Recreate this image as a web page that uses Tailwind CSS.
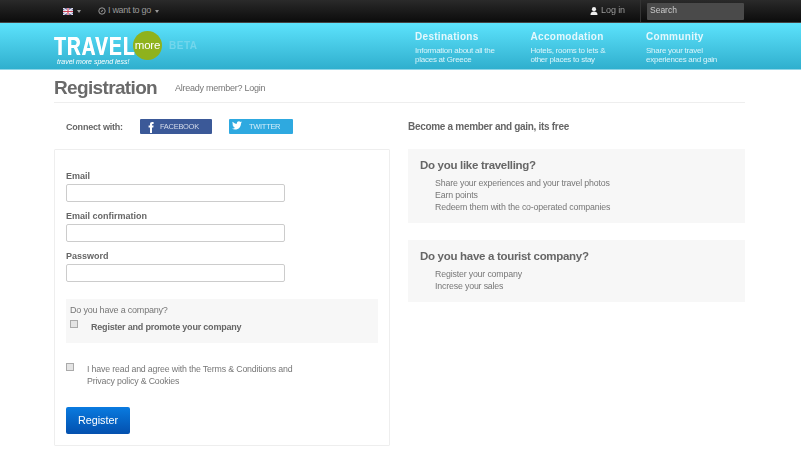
<!DOCTYPE html>
<html lang="en">
<head>
  <meta charset="UTF-8">
  <title>Registration</title>
  <script src="https://cdn.jsdelivr.net/npm/@tailwindcss/browser@4"></script>
</head>
<body class="h-[466px] overflow-hidden bg-white font-['Liberation_Sans',Arial,sans-serif] text-[#777]">
<div class="blur-[0.3px]">

  <!-- top bar -->
  <div class="h-[23px] flex items-center bg-gradient-to-b from-[#2a2a2a] to-[#0c0c0c] border-b border-[#444] text-[9px] text-[#999]">
    <div class="ml-[63px] flex items-center gap-[4px]">
      <svg width="10" height="7" viewBox="0 0 10 7"><rect width="10" height="7" fill="#5b5f9e"/><path d="M0 0L10 7M10 0L0 7" stroke="#eee" stroke-width="1.2"/><path d="M5 0V7M0 3.5H10" stroke="#fff" stroke-width="2.4"/><path d="M5 0V7M0 3.5H10" stroke="#c8455a" stroke-width="1.2"/></svg>
      <span class="w-0 h-0 border-x-[2.5px] border-x-transparent border-t-[3px] border-t-[#999]"></span>
    </div>
    <div class="ml-[17px] flex items-center">
      <svg width="8" height="8" viewBox="0 0 8 8" fill="none" stroke="#999"><circle cx="4" cy="4" r="3.2"/><path d="M5.500 2.500L4.400 4.400 2.500 5.500 3.600 3.600Z" fill="#999" stroke="none"/></svg>
      <span class="ml-[2px] tracking-[-0.3px]">I want to go</span>
      <span class="ml-[4px] w-0 h-0 border-x-[2.5px] border-x-transparent border-t-[3px] border-t-[#999]"></span>
    </div>
    <div class="ml-auto flex items-center">
      <svg width="8" height="8" viewBox="0 0 8 8" fill="#eee"><circle cx="4" cy="2.200" r="2.100"/><path d="M0.500 8C0.500 5.300 2 4.600 4 4.600S7.500 5.300 7.500 8Z"/></svg>
      <span class="ml-[3px] tracking-[-0.1px]">Log in</span>
    </div>
    <div class="ml-[15px] h-full border-l border-[#333]"></div>
    <div class="ml-[6px] mr-[57px] w-[97px] h-[17px] bg-[#4a4a4a] rounded-[1px] pl-[3px] leading-[15px] text-[8.5px] text-[#ccc]">Search</div>
  </div>

  <!-- blue header -->
  <div class="h-[47px] flex bg-gradient-to-b from-[#5ce3fc] to-[#2fafce] border-b border-[#8fd6e8] pl-[54px] text-white">
    <div class="w-[361px] relative">
      <div class="flex items-center pt-[8px]">
        <span class="mt-[1px] w-[78px] text-[25px] leading-[20px] font-bold tracking-[1.5px] [text-shadow:0.6px_0_0_#fff] scale-x-[0.76] origin-left whitespace-nowrap">TRAVEL</span>
        <span class="ml-px w-[29px] h-[29px] rounded-full bg-[#8fb21c] flex items-center justify-center text-[11.5px] tracking-[-0.2px]">more</span>
        <span class="ml-[7px] text-[10px] font-bold tracking-[0.5px] text-[#72d6ec]">BETA</span>
      </div>
      <div class="absolute top-[35px] left-[3px] text-[7px] leading-[8px] italic whitespace-nowrap">travel more spend less!</div>
    </div>
    <div class="w-[115.5px] pt-[8px]">
      <div class="text-[10px] leading-[12px] font-bold tracking-[0.3px] text-[#e4f8fd]">Destinations</div>
      <div class="mt-[3px] text-[8px] leading-[9px] tracking-[-0.25px] text-[#d9f4fa]">Information about all the<br>places at Greece</div>
    </div>
    <div class="w-[115.5px] pt-[8px]">
      <div class="text-[10px] leading-[12px] font-bold tracking-[0.3px] text-[#e4f8fd]">Accomodation</div>
      <div class="mt-[3px] text-[8px] leading-[9px] tracking-[-0.25px] text-[#d9f4fa]">Hotels, rooms to lets &amp;<br>other places to stay</div>
    </div>
    <div class="pt-[8px]">
      <div class="text-[10px] leading-[12px] font-bold tracking-[0.3px] text-[#e4f8fd]">Community</div>
      <div class="mt-[3px] text-[8px] leading-[9px] tracking-[-0.25px] text-[#d9f4fa]">Share your travel<br>experiences and gain</div>
    </div>
  </div>

  <main class="ml-[54px] w-[691px]">
    <div class="h-[33px] flex items-center border-b border-[#eee]">
      <h1 class="mt-[3px] text-[19px] tracking-[-0.65px] font-bold text-[#6a6a6a] leading-[32px]">Registration</h1>
      <span class="mt-[6px] ml-[18px] text-[9px] tracking-[-0.25px] text-[#777]">Already member? Login</span>
    </div>

    <div class="flex">
      <!-- left column -->
      <div class="w-[336px]">
        <div class="h-[46px] pl-[12px] flex items-center text-[9px] tracking-[-0.2px] font-bold text-[#666]">
          <span class="w-[74px] pt-[4px]">Connect with:</span>
          <span class="mt-[1px] w-[72px] h-[15px] bg-[#3b5998] rounded-[1px] flex items-center text-[7.5px] tracking-[-0.3px] text-[#d5dcea]">
            <svg class="ml-[5px]" width="10" height="12" viewBox="0 0 10 12" fill="#fff"><path d="M5 12V6.500H3.600V4.600H5V3.400C5 1.800 5.800 1 7.200 1H8.600V3H7.700C7.200 3 7 3.200 7 3.700V4.600H8.600L8.300 6.500H7V12Z"/></svg>
            <span class="ml-[5px] pt-px font-normal">FACEBOOK</span>
          </span>
          <span class="mt-[1px] ml-[17px] w-[64px] h-[15px] bg-[#2ea9e0] rounded-[1px] flex items-center text-[7.5px] tracking-[-0.3px] text-[#d5eef9]">
            <svg class="ml-[3px] -mt-[2px]" width="10" height="9" viewBox="0 0 24 20" fill="#fff"><path d="M24 2.400c-.9.4-1.800.7-2.800.8 1-.6 1.800-1.600 2.200-2.700-1 .6-2 1-3.100 1.200C19.300.7 18 0 16.600 0c-2.700 0-4.900 2.200-4.900 4.900 0 .4 0 .8.1 1.100C7.700 5.800 4.100 3.900 1.700.9c-.4.7-.7 1.600-.7 2.500 0 1.700.9 3.200 2.200 4.100-.8 0-1.600-.2-2.200-.6v.1c0 2.400 1.700 4.400 3.900 4.800-.4.1-.8.2-1.300.2-.3 0-.6 0-.9-.1.6 2 2.400 3.400 4.600 3.400-1.700 1.300-3.800 2.100-6.100 2.100-.4 0-.8 0-1.200-.1 2.200 1.400 4.800 2.200 7.500 2.200 9.100 0 14-7.500 14-14v-.6c1-.7 1.800-1.600 2.400-2.600z"/></svg>
            <span class="ml-[7px] pt-px font-normal">TWITTER</span>
          </span>
        </div>

        <form class="h-[297px] border border-[#eee] rounded-[1px] pl-[11px] pr-[11px] pt-[20px]">
          <label class="block text-[9px] leading-[12px] font-bold text-[#666]">Email</label>
          <input type="text" class="block mt-[2px] w-[219px] h-[18px] bg-white border border-[#ccc] rounded-[2px]">
          <label class="block mt-[8px] text-[9px] leading-[12px] font-bold text-[#666]">Email confirmation</label>
          <input type="text" class="block mt-[2px] w-[219px] h-[18px] bg-white border border-[#ccc] rounded-[2px]">
          <label class="block mt-[8px] text-[9px] leading-[12px] font-bold text-[#666]">Password</label>
          <input type="text" class="block mt-[2px] w-[219px] h-[18px] bg-white border border-[#ccc] rounded-[2px]">

          <div class="mt-[17px] h-[44px] w-[312px] bg-[#f7f7f7] pl-[4px] pt-[5px]">
            <div class="text-[9px] leading-[12px] tracking-[-0.2px]">Do you have a company?</div>
            <div class="flex mt-[4px]">
              <span class="block w-[8px] h-[8px] bg-[#e4e4e4] border border-[#aaa]"></span>
              <span class="ml-[13px] mt-[1px] text-[9px] tracking-[-0.2px] leading-[12px] font-bold text-[#666]">Register and promote your company</span>
            </div>
          </div>

          <div class="mt-[20px] flex">
            <span class="block w-[8px] h-[8px] bg-[#e4e4e4] border border-[#aaa]"></span>
            <span class="ml-[13px] text-[8.8px] tracking-[-0.17px] leading-[12px]">I have read and agree with the Terms &amp; Conditions and<br>Privacy policy &amp; Cookies</span>
          </div>

          <button type="button" class="block mt-[20px] w-[64px] h-[27px] rounded-[2px] bg-gradient-to-b from-[#0a7be0] to-[#0450ae] text-white text-[10.8px]">Register</button>
        </form>
      </div>

      <!-- right column -->
      <div class="ml-[18px] w-[337px]">
        <div class="h-[46px] pt-[17px] text-[10px] tracking-[-0.3px] leading-[13px] font-bold text-[#666]">Become a member and gain, its free</div>
        <section class="h-[74px] bg-[#f7f7f7] pl-[12px] pt-[9px]">
          <h2 class="text-[11.5px] tracking-[-0.3px] leading-[14px] font-bold text-[#666]">Do you like travelling?</h2>
          <ul class="mt-[5px] ml-[15px] text-[8.8px] tracking-[-0.17px] leading-[12px]">
            <li>Share your experiences and your travel photos</li>
            <li>Earn points</li>
            <li>Redeem them with the co-operated companies</li>
          </ul>
        </section>
        <section class="mt-[17px] h-[62px] bg-[#f7f7f7] pl-[12px] pt-[9px]">
          <h2 class="text-[11.5px] tracking-[-0.3px] leading-[14px] font-bold text-[#666]">Do you have a tourist company?</h2>
          <ul class="mt-[5px] ml-[15px] text-[8.8px] tracking-[-0.17px] leading-[12px]">
            <li>Register your company</li>
            <li>Increse your sales</li>
          </ul>
        </section>
      </div>
    </div>
  </main>
</div>
</body>
</html>
